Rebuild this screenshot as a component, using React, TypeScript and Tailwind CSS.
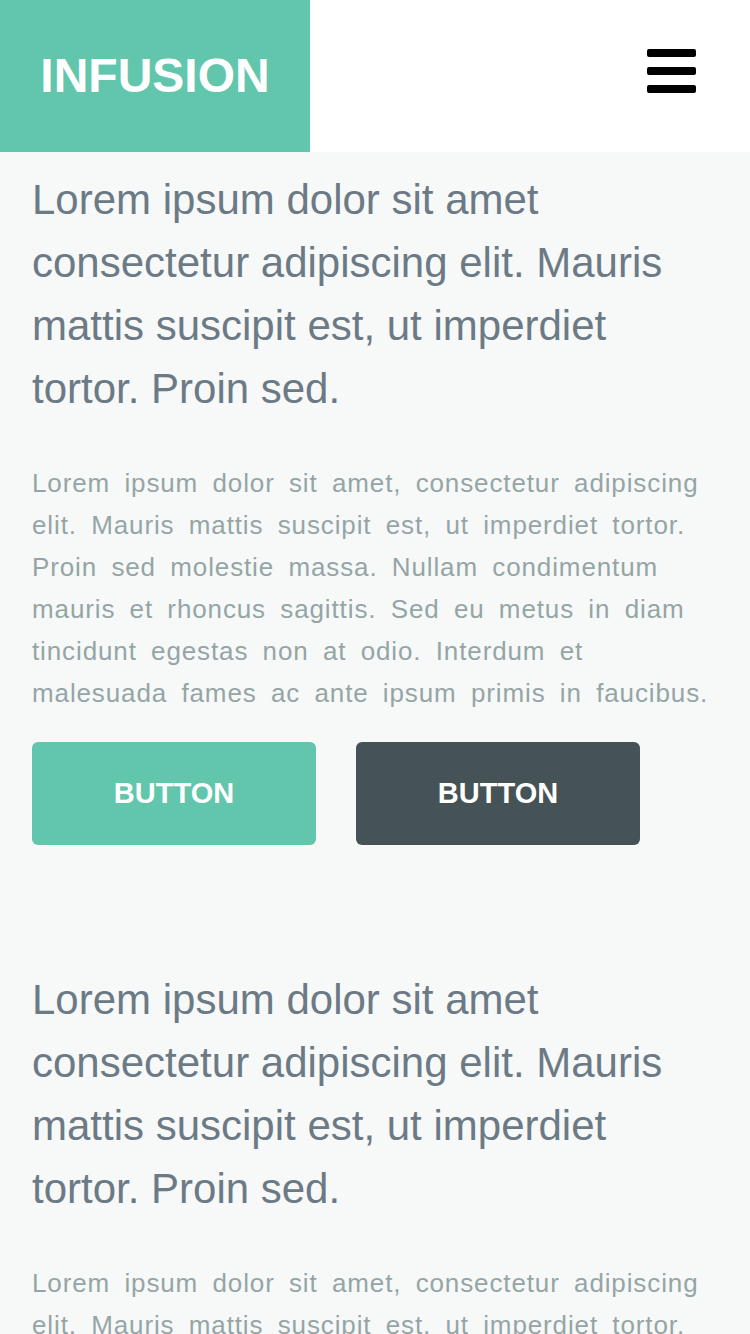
import React from "react";

const Section: React.FC = () => (
  <section className="px-8 pt-4 pb-[107px]">
    <h2 className="text-[42px] leading-[63px] text-[#6c7a86] font-normal">
      Lorem ipsum dolor sit amet consectetur adipiscing elit. Mauris mattis suscipit est, ut imperdiet tortor. Proin sed.
    </h2>
    <p className="mt-[42px] text-[26px] leading-[42px] text-[#95a5a6] tracking-[0.88px] [word-spacing:6.2px]">
      Lorem ipsum dolor sit amet, consectetur adipiscing elit. Mauris mattis suscipit est, ut imperdiet tortor. Proin sed molestie massa. Nullam condimentum mauris et rhoncus sagittis. Sed eu metus in diam tincidunt egestas non at odio. Interdum et malesuada fames ac ante ipsum primis in faucibus.
    </p>
    <div className="mt-7 flex gap-10">
      <button className="w-[284px] h-[103px] rounded-md bg-[#62c6ad] text-white font-bold text-[29px]">
        BUTTON
      </button>
      <button className="w-[284px] h-[103px] rounded-md bg-[#455357] text-white font-bold text-[29px]">
        BUTTON
      </button>
    </div>
  </section>
);

const App: React.FC = () => {
  return (
    <div className="min-h-screen bg-[#f7f9f8] font-['Liberation_Sans',Arial,sans-serif]">
      <header className="h-[152px] flex items-stretch justify-between bg-white">
        <div className="w-[310px] bg-[#62c6ad] flex items-center justify-center">
          <span className="text-white font-bold text-[48px] leading-none">INFUSION</span>
        </div>
        <div className="flex items-center pr-[54px] pb-[10px]">
          <button className="flex flex-col gap-[10px] w-[49px]" aria-label="menu">
            <span className="block h-2 w-full rounded-[2px] bg-black" />
            <span className="block h-2 w-full rounded-[2px] bg-black" />
            <span className="block h-2 w-full rounded-[2px] bg-black" />
          </button>
        </div>
      </header>
      <Section />
      <Section />
    </div>
  );
};

export default App;
